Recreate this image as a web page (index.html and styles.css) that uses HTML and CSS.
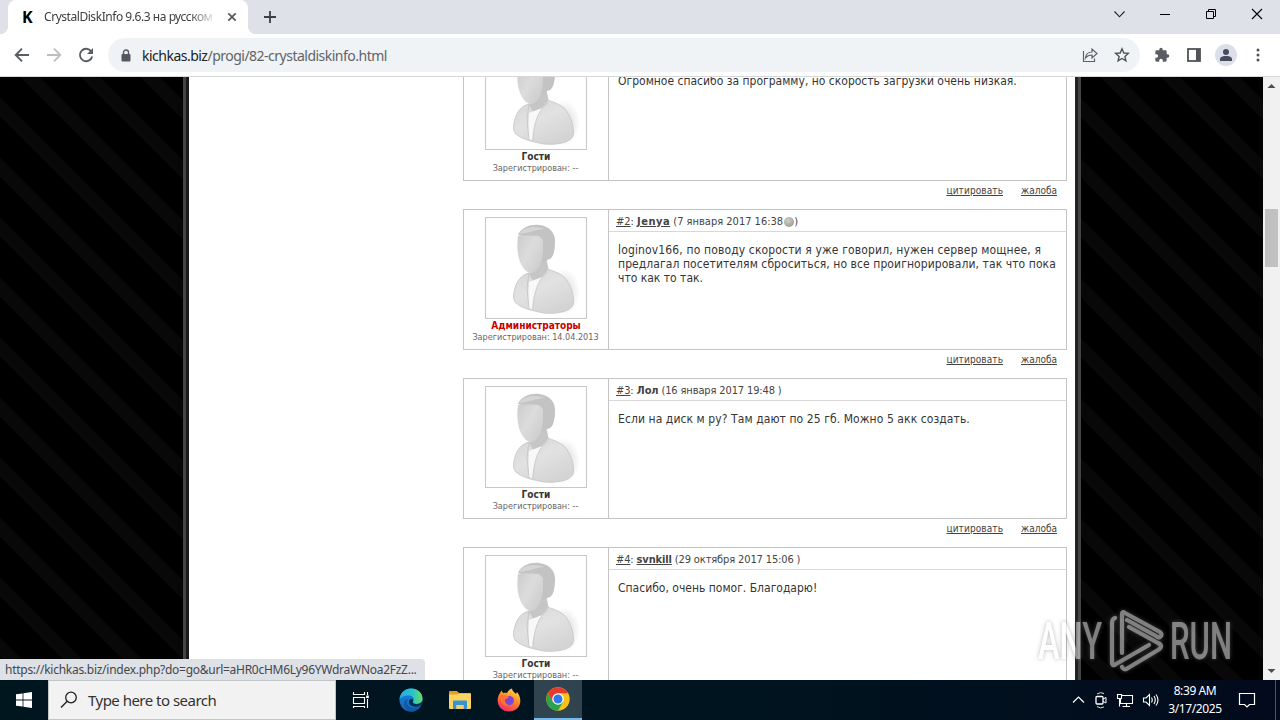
FILE: index.html
```html
<!DOCTYPE html>
<html lang="ru">
<head>
  <meta charset="UTF-8">
  <title>CrystalDiskInfo 9.6.3 на русском</title>
  <link rel="stylesheet" href="styles.css">
</head>
<body>
  <svg class="defs" width="0" height="0">
    <defs>
      <linearGradient id="face" x1="0" y1="0" x2="1" y2="0.8">
        <stop offset="0" stop-color="#cccccc"/><stop offset="0.5" stop-color="#dcdcdc"/><stop offset="1" stop-color="#cccccc"/>
      </linearGradient>
      <linearGradient id="coat" x1="0" y1="0" x2="0.6" y2="1">
        <stop offset="0" stop-color="#d6d6d6"/><stop offset="0.5" stop-color="#e2e2e2"/><stop offset="1" stop-color="#d4d4d4"/>
      </linearGradient>
      <radialGradient id="shade">
        <stop offset="0" stop-color="#d4d4d4"/><stop offset="1" stop-color="#fff"/>
      </radialGradient>
      <symbol id="avatar" viewBox="0 0 100 100">
        <ellipse cx="78" cy="74" rx="16" ry="23" fill="url(#shade)"/>
        <path d="M44 50 L43 64 L48 70 L57 62 L63 54 L60 38 Z" fill="#c6c6c6"/>
        <path d="M56 20 C62 18 68 22 68 27 C69 36 66 42 60 42 L54 46 Z" fill="#c2c2c2"/>
        <path d="M32 18 C31 26 31 34 33 41 C35 48 40 55 45 55 C52 54 57 44 57 32 L57 19 C50 16 40 16 32 18 Z" fill="url(#face)"/>
        <path d="M32 17 C35 9 46 6 53 7 C64 8 70 16 69 25 C69 31 68 35 65 39 C65 33 62 29 58 30 C58 24 57 20 52 18 C45 17 38 18 32 17 Z" fill="#c3c3c3"/>
        <path d="M33 16 C37 9 49 7 59 11 C50 11 45 15 33 16 Z" fill="#d5d5d5"/>
        <path d="M43 55 C35 57 31 63 29 70 C27 77 27 82 30 85 C37 91 48 93 58 95 C70 96 84 94 87 87 C89 80 85 66 78 59 C72 54 66 53 62 51 C59 57 53 62 48 64 Z" fill="url(#coat)" stroke="#cbcbcb"/>
        <path d="M43 64 L56 59 C49 68 47 80 46 91 L42 90 Z" fill="#f8f8f8"/>
        <path d="M62 54 C52 61 48 74 47 92" fill="none" stroke="#d0d0d0"/>
        <path d="M43 55 L41 70 L43 91" fill="none" stroke="#c8c8c8"/>
      </symbol>
    </defs>
  </svg>

  <div class="tabstrip">
    <div class="tab">
      <span class="favicon">K</span>
      <span class="tab-title">CrystalDiskInfo 9.6.3 на русском</span>
      <svg class="tab-close" width="10" height="10" viewBox="0 0 10 10"><path d="M1.3 1.3 L8.7 8.7 M8.7 1.3 L1.3 8.7" stroke="#55585c" stroke-width="1.7"/></svg>
    </div>
    <svg class="new-tab" width="14" height="14" viewBox="0 0 14 14"><path d="M7 1 V13 M1 7 H13" stroke="#3c4043" stroke-width="1.8"/></svg>
    <div class="window-buttons">
      <svg width="46" height="28" viewBox="0 0 46 28"><path d="M18.5 11.5 L23.5 16.8 L28.5 11.5" fill="none" stroke="#222" stroke-width="1.1"/></svg>
      <svg width="46" height="28" viewBox="0 0 46 28"><path d="M18 14.5 H28" stroke="#000"/></svg>
      <svg width="46" height="28" viewBox="0 0 46 28"><path d="M18.5 11.5 H25.5 V18.5 H18.5 Z M20.5 11.5 V9.5 H27.5 V16.5 H25.5" fill="none" stroke="#000"/></svg>
      <svg width="46" height="28" viewBox="0 0 46 28"><path d="M18 9 L28 19 M28 9 L18 19" stroke="#000" stroke-width="1.1"/></svg>
    </div>
  </div>

  <div class="toolbar">
    <svg width="16" height="16" viewBox="0 0 16 16"><path d="M15 8 H2 M8 1.7 L1.7 8 L8 14.3" fill="none" stroke="#5a5d61" stroke-width="1.9"/></svg>
    <svg width="16" height="16" viewBox="0 0 16 16"><path d="M1 8 H14 M8 1.7 L14.3 8 L8 14.3" fill="none" stroke="#bcbec1" stroke-width="1.8"/></svg>
    <svg width="16" height="16" viewBox="0 0 16 16"><path d="M13.3 4.5 A6.2 6.2 0 1 0 14.2 9.5" fill="none" stroke="#5a5d61" stroke-width="1.9"/><path d="M15 1 V7 H9 Z" fill="#5a5d61"/></svg>
    <div class="address">
      <svg width="10" height="13" viewBox="0 0 10 13"><path d="M2.5 5.5 V3.5 A2.5 2.5 0 0 1 7.5 3.5 V5.5" fill="none" stroke="#55585c" stroke-width="1.4"/><rect x="0.5" y="5" width="9" height="7.5" rx="1" fill="#55585c"/></svg>
      <span class="url"><b>kichkas.biz</b>/progi/82-crystaldiskinfo.html</span>
      <svg class="share" width="16" height="16" viewBox="0 0 16 16"><path d="M1.5 4 V14.5 H12.5 V11.5 M3.5 11 C4 7 6.5 5 10 5 V2 L15 6.5 L10 11 V8 C7 8 5 9 3.500 11 Z" fill="none" stroke="#5f6368" stroke-width="1.2"/></svg>
      <svg width="16" height="16" viewBox="0 0 16 16"><path d="M8 1.8 L9.8 6 L14.3 6.4 L10.9 9.4 L11.9 13.9 L8 11.5 L4.1 13.9 L5.1 9.4 L1.7 6.4 L6.2 6 Z" fill="none" stroke="#4f5256" stroke-width="1.4"/></svg>
    </div>
    <svg class="puzzle" width="16" height="16" viewBox="0 0 24 24"><path d="M20.5 11H19V7c0-1.1-.9-2-2-2h-4V3.5a2.5 2.5 0 0 0-5 0V5H4c-1.1 0-2 .9-2 2v3.8h1.5a2.7 2.7 0 0 1 0 5.400H2V20c0 1.1.9 2 2 2h3.8v-1.5a2.7 2.7 0 0 1 5.4 0V22H17c1.1 0 2-.9 2-2v-4h1.5a2.5 2.5 0 0 0 0-5z" fill="#5a5d61"/></svg>
    <svg class="panel" width="14" height="14" viewBox="0 0 14 14"><rect x="1" y="1" width="12" height="12" fill="none" stroke="#505357" stroke-width="1.8"/><rect x="9" y="1" width="4" height="12" fill="#505357"/></svg>
    <svg class="profile" width="22" height="22" viewBox="0 0 22 22"><circle cx="11" cy="11" r="11" fill="#dcdfe9"/><circle cx="11" cy="8" r="3" fill="#484c5f"/><path d="M5 17 V15 C5 12.5 9 12 11 12 C13 12 17 12.5 17 15 V17 Z" fill="#484c5f"/></svg>
    <svg class="dots" width="4" height="14" viewBox="0 0 4 14"><circle cx="2" cy="2" r="1.5" fill="#505357"/><circle cx="2" cy="7" r="1.5" fill="#505357"/><circle cx="2" cy="12" r="1.5" fill="#505357"/></svg>
  </div>

  <div class="viewport">
    <div class="site">
      <div class="page">
        <div class="comment">
          <div class="user">
            <svg class="avatar"><use href="#avatar"/></svg>
            <div class="group">Гости</div>
            <div class="registered">Зарегистрирован: --</div>
          </div>
          <div class="message">
            <div class="message-head"></div>
            <div class="message-text"><p>Огромное спасибо за программу, но скорость загрузки очень низкая.</p></div>
          </div>
        </div>
        <div class="actions"><a class="quote">цитировать</a><a class="report">жалоба</a></div>

        <div class="comment">
          <div class="user">
            <svg class="avatar"><use href="#avatar"/></svg>
            <div class="group admin">Администраторы</div>
            <div class="registered">Зарегистрирован: 14.04.2013</div>
          </div>
          <div class="message">
            <div class="message-head"><a>#2</a>: <a class="author wide">Jenya</a> (7 января 2017 16:38 <i class="status"></i>)</div>
            <div class="message-text"><p><span class="loose">loginov166, по поводу скорости я уже говорил, нужен сервер мощнее, я</span><br><span class="semi">предлагал посетителям сброситься, но все проигнорировали, так что пока</span><br>что как то так.</p></div>
          </div>
        </div>
        <div class="actions"><a class="quote">цитировать</a><a class="report">жалоба</a></div>

        <div class="comment">
          <div class="user">
            <svg class="avatar"><use href="#avatar"/></svg>
            <div class="group">Гости</div>
            <div class="registered">Зарегистрирован: --</div>
          </div>
          <div class="message">
            <div class="message-head tight"><a>#3</a>: <b>Лол</b> (16 января 2017 19:48 )</div>
            <div class="message-text"><p class="semi">Если на диск м ру? Там дают по 25 гб. Можно 5 акк создать.</p></div>
          </div>
        </div>
        <div class="actions"><a class="quote">цитировать</a><a class="report">жалоба</a></div>

        <div class="comment">
          <div class="user">
            <svg class="avatar"><use href="#avatar"/></svg>
            <div class="group">Гости</div>
            <div class="registered">Зарегистрирован: --</div>
          </div>
          <div class="message">
            <div class="message-head tight"><a>#4</a>: <a class="author">svnkill</a> (29 октября 2017 15:06 )</div>
            <div class="message-text"><p>Спасибо, очень помог. Благодарю!</p></div>
          </div>
        </div>
      </div>
    </div>
    <div class="scrollbar">
      <svg width="17" height="17" viewBox="0 0 17 17"><path d="M4.5 11 L8.5 7 L12.5 11 Z" fill="#505050"/></svg>
      <div class="thumb"></div>
      <svg width="17" height="17" viewBox="0 0 17 17"><path d="M4.5 6 L8.5 10 L12.5 6 Z" fill="#505050"/></svg>
    </div>
    <div class="status-bubble">https://kichkas.biz/index.php?do=go&amp;url=aHR0cHM6Ly96YWdraWNoa2FzZ...</div>
    <svg class="watermark" width="210" height="76" viewBox="1030 604 210 76">
      <g fill="#fff">
        <text x="1038" y="659" textLength="64" lengthAdjust="spacingAndGlyphs">ANY</text>
        <text x="1170" y="659" textLength="62" lengthAdjust="spacingAndGlyphs">RUN</text>
      </g>
      <g fill="none" stroke="#fff" stroke-width="4.2" stroke-linejoin="round" stroke-linecap="round">
        <path d="M1122 653 V614 Q1122 611 1125 613 L1160 632 Q1163 635 1160 637 Q1158 638 1156 636 L1127 620"/>
        <path d="M1115 618 Q1112 619 1112 623 V662 Q1112 667 1116 664 L1149 645"/>
        <path d="M1122 667 Q1124 671 1128 668 L1158 650 Q1164 646 1158 643 L1129 627"/>
      </g>
    </svg>
  </div>

  <div class="taskbar">
    <div class="start">
      <svg width="16" height="16" viewBox="0 0 16 16"><path d="M0 2.3 L6.6 1.4 V7.6 H0 Z M7.4 1.2 L16 0 V7.6 H7.4 Z M0 8.4 H6.6 V14.6 L0 13.7 Z M7.4 8.4 H16 V16 L7.4 14.8 Z" fill="#fff"/></svg>
    </div>
    <div class="search">
      <svg width="18" height="18" viewBox="0 0 18 18"><circle cx="11" cy="6.5" r="5.3" fill="none" stroke="#222" stroke-width="1.3"/><path d="M7.2 10.3 L1 16.5" stroke="#222" stroke-width="1.4"/></svg>
      <span>Type here to search</span>
    </div>
    <div class="app">
      <svg width="18" height="18" viewBox="0 0 18 18"><path d="M1.5 1 V3.5 H12.5 V1 M1.5 6.5 H12.5 V12.5 H1.5 Z M1.5 17 V15.5 H12.5 V17 M15.5 1 V4 M15.5 8 V17" fill="none" stroke="#fff" stroke-width="1.1"/><rect x="14.2" y="4.5" width="2.6" height="2.6" fill="#fff"/></svg>
    </div>
    <div class="app edge">
      <svg width="24" height="24" viewBox="0 0 24 24">
        <defs>
          <linearGradient id="edgeTop"><stop offset="0" stop-color="#27a9e6"/><stop offset="0.6" stop-color="#2cc5c8"/><stop offset="1" stop-color="#6bde58"/></linearGradient>
          <linearGradient id="edgeLow" x1="0" y1="0" x2="0" y2="1"><stop offset="0" stop-color="#1684d9"/><stop offset="1" stop-color="#1766bd"/></linearGradient>
        </defs>
        <circle cx="12" cy="12" r="11.5" fill="url(#edgeLow)"/>
        <path d="M0.5 11.5 C1 5 6 .5 12 .5 C19 .5 23.5 5 23.5 10.5 C23.5 14 21 16 17.5 16 C15 16 13.5 15 14 14 C16 11 14 8 10.5 7.5 C6 7 1.5 9 .5 11.5 Z" fill="url(#edgeTop)"/>
        <path d="M9 11 C6 14 9 20 15 20 C18 20 20 19 22 17.5 C20 21 17 23.5 12.5 23.5 C7 23 5 19 5 16 C5 13 7 11 9 11 Z" fill="#1159a4"/>
        <path d="M14 14 C13.5 15 15 16.2 17.5 16 C20 16 22 15 23 13.5 C23.500 16 22 18 19 18.5 C14 19.500 9.5 17 10 13.5 C10.3 11.5 12 10.5 14 11.5 Z" fill="#032f52"/>
      </svg>
    </div>
    <div class="app explorer">
      <svg width="22" height="18" viewBox="0 0 22 18"><path d="M0 1 Q0 0 1 0 H8 L10 2 H21 Q22 2 22 3 V6 H0 Z" fill="#e4a01c"/><path d="M0 3.5 H8 L10 2.5 H21 Q22 2.5 22 3.5 V17 Q22 18 21 18 H1 Q0 18 0 17 Z" fill="#fcd462"/><path d="M4 18 V10.5 Q4 9.5 5 9.5 H17 Q18 9.5 18 10.5 V18 H14.5 V14 H7.5 V18 Z" fill="#3793cf"/><rect x="7.5" y="14" width="7" height="4" fill="#f2cf62"/></svg>
    </div>
    <div class="app firefox">
      <svg width="24" height="24" viewBox="0 0 24 24">
        <defs><linearGradient id="fox" x1="0.8" y1="0" x2="0.3" y2="1"><stop offset="0" stop-color="#ffe14a"/><stop offset="0.45" stop-color="#ff8a24"/><stop offset="1" stop-color="#f0286c"/></linearGradient></defs>
        <path d="M3 5 L4.5 2.5 L6 5 C7.5 4.5 9 4.5 10 5 C11 3 13 1 15 .5 C15 3 17.5 4 19 6 L20 4 C24 9 24.5 15 21 19.5 C17 24.5 8 25 3.5 20 C-.5 15.5 0 9 3 5 Z" fill="url(#fox)"/>
        <circle cx="12.3" cy="12.5" r="4.6" fill="#7a45d8"/>
        <path d="M4 7 C8 7 9 8 12 8.5 C11 11 8.5 10.5 8 12 C7.5 14 9 16.5 12 17 C9 19 5 17 4 13 Z" fill="#ff7132"/>
      </svg>
    </div>
    <div class="app active">
      <svg width="24" height="24" viewBox="0 0 24 24">
        <circle cx="12" cy="12" r="11.7" fill="#fbc116"/>
        <path d="M12 12 L17.1 15 L12 23.7 A11.7 11.7 0 0 1 1.87 6.15 L6.9 15 Z" fill="#2ba24c"/>
        <path d="M1.87 6.15 A11.7 11.7 0 0 1 22.13 6.15 L12 6.15 L7 15 Z" fill="#e33b2e"/>
        <circle cx="12" cy="12" r="5.8" fill="#fff"/><circle cx="12" cy="12" r="4.5" fill="#2f78e8"/>
      </svg>
    </div>
    <div class="tray">
      <svg width="14" height="18" viewBox="0 0 14 18"><path d="M2 11.5 L7.5 6 L13 11.5" fill="none" stroke="#fff" stroke-width="1.2"/></svg>
      <svg width="14" height="18" viewBox="0 0 14 18"><path d="M3 3 Q6.5 .5 10 2.5 M3 15.5 Q6.5 18 10 16" fill="none" stroke="#ddd"/><rect x="2" y="5.5" width="7" height="7.5" rx="1" fill="none" stroke="#fff" stroke-width="1.3"/><path d="M9 8 L12 6.5 V12 L9 10.5" fill="none" stroke="#fff"/></svg>
      <svg width="18" height="18" viewBox="0 0 18 18"><path d="M5 4.5 H16.5 V12.5 H4.5 V8 M10.5 12.5 V15.5 M6.5 15.5 H14 M1.5 3.5 H5.5 V7.5 H1.5 Z M3.5 7.5 V15.5" fill="none" stroke="#fff" stroke-width="1.1"/></svg>
      <svg width="18" height="18" viewBox="0 0 18 18"><path d="M1.5 7 H4 L7.5 3.5 V14.5 L4 11 H1.5 Z M9.5 6.5 Q11 9 9.5 11.5 M12 5 Q14.5 9 12 13 M14 3.5 Q18 9 14 14.5" fill="none" stroke="#fff" stroke-width="1.1"/></svg>
    </div>
    <div class="clock"><div class="time">8:39 AM</div><div class="date">3/17/2025</div></div>
    <svg class="notify" width="18" height="18" viewBox="0 0 18 18"><path d="M1.5 2.5 H16.5 V13.5 H11.5 L9 16 L6.5 13.5 H1.5 Z" fill="none" stroke="#fff" stroke-width="1.2"/></svg>
    <div class="show-desktop"></div>
  </div>
</body>
</html>
```
FILE: styles.css
```css
* {
  box-sizing: border-box;
}
body {
  margin: 0;
  width: 1280px;
  height: 720px;
  overflow: hidden;
  display: flex;
  flex-direction: column;
  font-family: "Noto Sans", "Open Sans", sans-serif;
}
svg {
  display: block;
  flex: none;
}
.defs {
  position: absolute;
}

/* browser window */
.tabstrip {
  height: 34px;
  background: #dee1e8;
  display: flex;
  padding-left: 8px;
}
.tab {
  position: relative;
  width: 240px;
  height: 34px;
  background: #fff;
  border-radius: 8px 8px 0 0;
  display: flex;
  align-items: center;
  padding: 0 11px 0 14px;
}
.tab::before,
.tab::after {
  content: "";
  position: absolute;
  bottom: 0;
  width: 8px;
  height: 8px;
}
.tab::before {
  left: -8px;
  background: radial-gradient(circle at 0 0, transparent 8px, #fff 8px);
}
.tab::after {
  right: -8px;
  background: radial-gradient(circle at 100% 0, transparent 8px, #fff 8px);
}
.favicon {
  font: bold 16px/16px "Open Sans", sans-serif;
  color: #000;
  width: 22px;
}
.tab-title {
  width: 173px;
  overflow: hidden;
  white-space: nowrap;
  font-size: 12px;
  line-height: 18px;
  letter-spacing: -0.45px;
  color: #3c4043;
  -webkit-mask-image: linear-gradient(to right, #000 145px, transparent 173px);
  mask-image: linear-gradient(to right, #000 145px, transparent 173px);
}
.tab-close {
  margin-left: auto;
}
.new-tab {
  margin: 10px 0 0 15px;
}
.window-buttons {
  margin-left: auto;
  display: flex;
}
.toolbar {
  height: 43px;
  background: #fff;
  border-bottom: 1px solid #d5d8db;
  display: flex;
  align-items: center;
  padding-left: 14px;
  gap: 16px;
}
.address {
  width: 1032px;
  height: 34px;
  margin-left: -2px;
  border-radius: 17px;
  background: #f0f3f5;
  display: flex;
  align-items: center;
  padding: 0 10px 0 13px;
}
.address svg + svg {
  margin-left: 16px;
}
.url {
  margin-left: 11px;
  font-size: 14px;
  letter-spacing: -0.51px;
  color: #5f6368;
}
.url b {
  font-weight: normal;
  color: #202124;
}
.address .share {
  margin-left: auto;
}
.puzzle {
  margin-left: -2px;
}
.panel {
  margin-left: 1px;
}
.profile {
  margin-left: -2px;
}
.dots {
  margin-left: 3px;
}

/* page */
.viewport {
  position: relative;
  height: 603px;
  display: flex;
  overflow: hidden;
}
.site {
  width: 1263px;
  background: #000 linear-gradient(45deg, transparent 16%, #080808 16%, #080808 32.5%, transparent 32.5%, transparent 66%, #080808 66%, #080808 82.5%, transparent 82.5%) 0 -1px / 60px 60px;
  padding-left: 183px;
}
.page {
  width: 898px;
  height: 603px;
  background: linear-gradient(to right, #444 3px, #1a1a1a 3px, #1a1a1a 6px, #fff 6px, #fff 892px, #202323 892px, #202323 895px, #444 895px);
  padding-left: 280px;
  overflow: hidden;
  font-family: "DejaVu Sans Condensed", "DejaVu Sans", Tahoma, sans-serif;
  font-stretch: condensed;
  color: #353535;
}
.comment {
  width: 604px;
  height: 141px;
  border: 1px solid #c4c4c4;
  display: flex;
}
.comment:first-child {
  margin-top: -37px;
}
.user {
  width: 145px;
  border-right: 1px solid #c4c4c4;
  padding-top: 7px;
  text-align: center;
  white-space: nowrap;
}
.avatar {
  width: 102px;
  height: 102px;
  border: 1px solid #c8c8c8;
  margin: 0 auto;
}
.group {
  font-size: 10px;
  line-height: 12px;
  font-weight: bold;
  padding-top: 1px;
  height: 13px;
}
.admin {
  color: #c80000;
}
.registered {
  font-size: 9px;
  line-height: 11px;
  padding-right: 1px;
  color: #666;
}
.message {
  flex: 1;
}
.message-head {
  height: 22px;
  border-bottom: 1px solid #d8d8d8;
  padding-left: 7px;
  font-size: 11px;
  line-height: 24px;
  white-space: nowrap;
  color: #444;
}
.message-head a,
.actions a {
  text-decoration: underline;
}
.tight {
  letter-spacing: -0.13px;
}
.author {
  font-weight: bold;
}
.wide {
  letter-spacing: 0.5px;
}
.status {
  display: inline-block;
  width: 10px;
  height: 10px;
  margin-left: -2px;
  border-radius: 50%;
  vertical-align: -2px;
  background: radial-gradient(circle at 40% 35%, #d0d2c6, #8c8e82);
}
.message-text p {
  margin: 11px 0 0 9px;
  font-size: 12px;
  line-height: 14px;
  white-space: nowrap;
}
.loose {
  letter-spacing: 0.14px;
}
.semi {
  letter-spacing: 0.08px;
}
.actions {
  height: 28px;
  width: 604px;
  padding: 3px 10px 0 0;
  display: flex;
  justify-content: flex-end;
  gap: 18px;
  font-size: 10px;
  line-height: 14px;
  color: #444;
}
.quote {
  letter-spacing: 0.1px;
}
.scrollbar {
  width: 17px;
  background: #f1f1f1;
  display: flex;
  flex-direction: column;
  align-items: center;
}
.thumb {
  width: 13px;
  height: 58px;
  margin: 115px 0 auto;
  background: #c1c1c1;
}
.status-bubble {
  position: absolute;
  left: 0;
  bottom: 0;
  width: 425px;
  height: 21px;
  padding-left: 5px;
  background: #dee1e6;
  border-radius: 0 4px 0 0;
  font-size: 12px;
  line-height: 21px;
  letter-spacing: -0.27px;
  color: #44474b;
  white-space: nowrap;
}
.watermark {
  position: absolute;
  left: 1030px;
  top: 527px;
  opacity: 0.5;
  filter: drop-shadow(0 0 2px #777);
}
.watermark text {
  font: 500 51px Roboto, sans-serif;
}

/* windows taskbar */
.taskbar {
  height: 40px;
  background: linear-gradient(to right, #00161f, #00141f 60%, #020a1c);
  display: flex;
  align-items: center;
  color: #fff;
}
.start {
  width: 48px;
  padding-left: 16px;
}
.search {
  width: 288px;
  height: 40px;
  background: #f2f2f2;
  border: 1px solid #c2c6c8;
  display: flex;
  align-items: center;
  padding-left: 11px;
  gap: 10px;
  font-size: 15px;
  letter-spacing: -0.52px;
  color: #333;
}
.app {
  width: 49px;
  height: 40px;
  display: flex;
  align-items: center;
  justify-content: center;
}
.edge {
  width: 51px;
}
.explorer {
  width: 47px;
}
.firefox {
  width: 51px;
}
.active {
  width: 48px;
  background: #304450;
  border-bottom: 2px solid #76b9ed;
}
.tray {
  margin-left: auto;
  display: flex;
  gap: 8px;
}
.tray svg:first-child {
  margin-right: 1px;
}
.clock {
  width: 70px;
  text-align: center;
  font-size: 12px;
  line-height: 18px;
  letter-spacing: -0.4px;
}
.notify {
  margin-left: 8px;
}
.show-desktop {
  width: 5px;
  height: 40px;
  margin-left: 19px;
  border-left: 1px solid #4c5360;
}
```
